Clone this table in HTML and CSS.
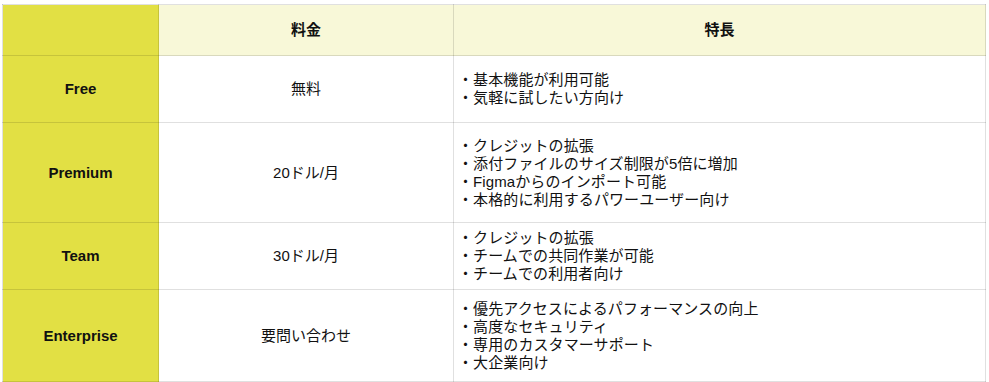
FILE: index.html
```html
<!DOCTYPE html>
<html lang="ja">
<head>
<meta charset="utf-8">
<link rel="stylesheet" href="styles.css">
</head>
<body>
<table class="plans">
  <colgroup>
    <col class="c-name">
    <col class="c-price">
    <col class="c-feat">
  </colgroup>
  <thead>
    <tr class="r-head">
      <th class="name"></th>
      <th>料金</th>
      <th>特長</th>
    </tr>
  </thead>
  <tbody>
    <tr class="r-free">
      <th class="name">Free</th>
      <td class="price">無料</td>
      <td class="feat">
        <div>・基本機能が利用可能</div>
        <div>・気軽に試したい方向け</div>
      </td>
    </tr>
    <tr class="r-premium">
      <th class="name">Premium</th>
      <td class="price">20ドル/月</td>
      <td class="feat">
        <div>・クレジットの拡張</div>
        <div>・添付ファイルのサイズ制限が5倍に増加</div>
        <div>・Figmaからのインポート可能</div>
        <div>・本格的に利用するパワーユーザー向け</div>
      </td>
    </tr>
    <tr class="r-team">
      <th class="name">Team</th>
      <td class="price">30ドル/月</td>
      <td class="feat">
        <div>・クレジットの拡張</div>
        <div>・チームでの共同作業が可能</div>
        <div>・チームでの利用者向け</div>
      </td>
    </tr>
    <tr class="r-ent">
      <th class="name">Enterprise</th>
      <td class="price">要問い合わせ</td>
      <td class="feat">
        <div>・優先アクセスによるパフォーマンスの向上</div>
        <div>・高度なセキュリティ</div>
        <div>・専用のカスタマーサポート</div>
        <div>・大企業向け</div>
      </td>
    </tr>
  </tbody>
</table>
</body>
</html>
```

FILE: styles.css
```css
html, body {
  margin: 0;
  padding: 0;
  background: #ffffff;
}
body {
  padding: 4px 0 0 2px;
  font-family: "Liberation Sans", "Noto Sans CJK JP", sans-serif;
  font-size: 15px;
  line-height: 18px;
  color: #111111;
}
.plans {
  border-collapse: collapse;
  width: 983px;
  table-layout: fixed;
}
.c-name { width: 156px; }
.c-price { width: 295px; }
.c-feat { width: 532px; }

.plans th,
.plans td {
  border: 1px solid rgba(0, 0, 0, 0.12);
  padding: 0 8px;
  vertical-align: middle;
}
.r-head > * { height: 50px; }
.r-free > * { height: 66px; }
.r-premium > * { height: 99px; }
.r-team > * { height: 66px; }
.r-ent > * { height: 91px; }

.plans thead th {
  background: #f8f8d8;
  font-weight: bold;
  text-align: center;
}
.plans th.name {
  background: #e2e044;
  font-weight: bold;
  text-align: center;
}
.plans td.price {
  text-align: center;
}
.plans td.feat {
  text-align: left;
  padding-left: 4px;
  letter-spacing: 0.1px;
}
```
